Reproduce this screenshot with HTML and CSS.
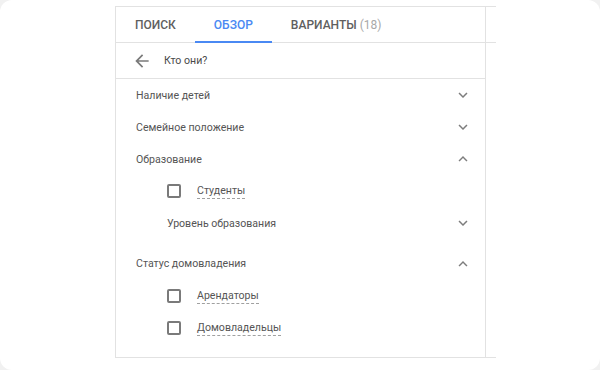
FILE: index.html
```html
<!DOCTYPE html>
<html lang="ru">
<head>
    <meta charset="UTF-8">
    <meta name="viewport" content="width=device-width, initial-scale=1.0">
    <title>Обзор аудиторий</title>
    <link rel="stylesheet" href="styles.css">
</head>
<body>
    <div class="card">
        <div class="frame">
            <div class="panel">
                <div class="tabs">
                    <div class="tab">Поиск</div>
                    <div class="tab active">Обзор</div>
                    <div class="tab">Варианты <span class="count">(18)</span></div>
                </div>

                <div class="crumb">
                    <svg class="back" viewBox="0 0 24 24"><path d="M20 11H7.83l5.59-5.59L12 4l-8 8 8 8 1.41-1.41L7.83 13H20v-2z"/></svg>
                    <span>Кто они?</span>
                </div>

                <div class="list">
                    <div class="row">
                        <span>Наличие детей</span>
                        <svg class="chev" viewBox="0 0 24 24"><path d="M16.59 8.59L12 13.17 7.41 8.59 6 10l6 6 6-6z"/></svg>
                    </div>
                    <div class="row">
                        <span>Семейное положение</span>
                        <svg class="chev" viewBox="0 0 24 24"><path d="M16.59 8.59L12 13.17 7.41 8.59 6 10l6 6 6-6z"/></svg>
                    </div>
                    <div class="row">
                        <span>Образование</span>
                        <svg class="chev" viewBox="0 0 24 24"><path d="M7.41 15.41L12 10.83l4.59 4.58L18 14l-6-6-6 6z"/></svg>
                    </div>
                    <div class="row sub">
                        <label class="check"><span class="box"></span><span class="lbl">Студенты</span></label>
                    </div>
                    <div class="row sub">
                        <span>Уровень образования</span>
                        <svg class="chev" viewBox="0 0 24 24"><path d="M16.59 8.59L12 13.17 7.41 8.59 6 10l6 6 6-6z"/></svg>
                    </div>
                    <div class="row group">
                        <span>Статус домовладения</span>
                        <svg class="chev" viewBox="0 0 24 24"><path d="M7.41 15.41L12 10.83l4.59 4.58L18 14l-6-6-6 6z"/></svg>
                    </div>
                    <div class="row sub">
                        <label class="check"><span class="box"></span><span class="lbl">Арендаторы</span></label>
                    </div>
                    <div class="row sub">
                        <label class="check"><span class="box"></span><span class="lbl">Домовладельцы</span></label>
                    </div>
                </div>
            </div>
            <div class="side">
                <div class="side-head"></div>
            </div>
        </div>
    </div>
</body>
</html>
```

FILE: styles.css
```css
html, body {
    height: 100%;
}
body {
    margin: 0;
    background-color: #f1f1f1;
    font-family: Roboto, "Liberation Sans", Arial, sans-serif;
    color: #555;
}
.card {
    height: 100%;
    box-sizing: border-box;
    background-color: #fff;
    border-radius: 12px;
    padding: 6px 0 0 115px;
}
.frame {
    display: flex;
    width: 381px;
    height: 352px;
    box-sizing: border-box;
    border: 1px solid #e2e2e2;
    border-right: none;
}
.panel {
    width: 369px;
    border-right: 1px solid #e2e2e2;
}
.side {
    flex: 1;
}
.side-head {
    height: 35px;
    border-bottom: 1px solid #e2e2e2;
}
.tabs {
    display: flex;
    height: 35px;
    border-bottom: 1px solid #e2e2e2;
}
.tab {
    display: flex;
    align-items: center;
    height: 36px;
    padding: 0 19px;
    margin-bottom: -1px;
    box-sizing: border-box;
    font-size: 12px;
    font-weight: 500;
    text-transform: uppercase;
    color: #5f5f5f;
}
.tab .count {
    font-weight: 400;
    color: #a8a8a8;
    margin-left: 3px;
}
.tab.active {
    color: #4a89f3;
    box-shadow: inset 0 -2px 0 #4a89f3;
}
.crumb {
    display: flex;
    align-items: center;
    height: 35px;
    padding-left: 16px;
    border-bottom: 1px solid #e2e2e2;
    font-size: 10.6px;
    color: #4a4a4a;
}
.back {
    width: 20px;
    height: 20px;
    fill: #7a7a7a;
    margin-right: 12px;
}
.row {
    display: flex;
    align-items: center;
    justify-content: space-between;
    height: 32px;
    padding: 0 13px 0 20px;
    font-size: 10.6px;
    color: #555;
}
.row.sub {
    padding-left: 51px;
}
.row.group {
    margin-top: 8px;
    height: 33px;
}
.chev {
    width: 18px;
    height: 18px;
    fill: #7d7d7d;
}
.check {
    display: flex;
    align-items: center;
}
.box {
    width: 10px;
    height: 10px;
    border: 2px solid #7a7a7a;
    border-radius: 2px;
    margin-right: 16px;
}
.lbl {
    border-bottom: 1px dashed #a0a0a0;
    line-height: 14px;
}
```
